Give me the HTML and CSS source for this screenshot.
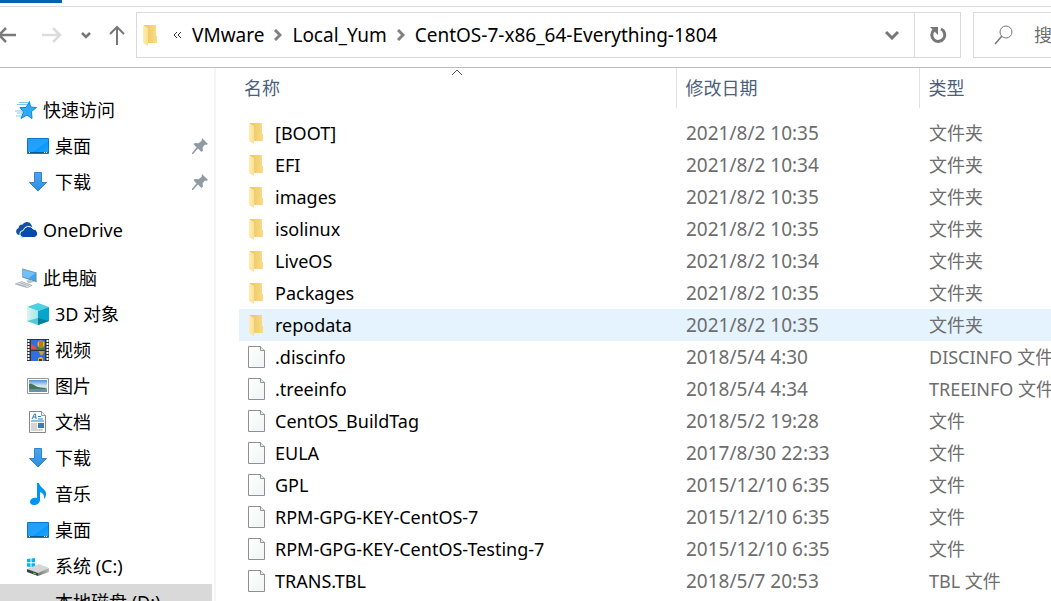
FILE: index.html
```html
<!DOCTYPE html>
<html lang="zh-CN">
<head>
<meta charset="utf-8">
<title>CentOS-7-x86_64-Everything-1804</title>
<link rel="stylesheet" href="styles.css">
</head>
<body>
<svg class="defs" aria-hidden="true">
  <defs>
    <linearGradient id="g-folder" x1="0" x2="1"><stop offset="0" stop-color="#e9c565"/><stop offset="1" stop-color="#fadc85"/></linearGradient>
    <linearGradient id="g-flap" x1="0" x2="1"><stop offset="0" stop-color="#ffeeb0"/><stop offset="1" stop-color="#fbe08d"/></linearGradient>
    <linearGradient id="g-page" x1="0" y1="0" x2="1" y2="1"><stop offset="0" stop-color="#ffffff"/><stop offset="1" stop-color="#f1f3f4"/></linearGradient>
    <linearGradient id="g-desk" x1="0" y1="0" x2="1" y2="1"><stop offset="0" stop-color="#1f9ffb"/><stop offset=".55" stop-color="#22a2fc"/><stop offset=".6" stop-color="#0c98fb"/><stop offset="1" stop-color="#1fa6ff"/></linearGradient>
    <linearGradient id="g-down" x1="0" y1="0" x2="0" y2="1"><stop offset="0" stop-color="#4ba6ee"/><stop offset="1" stop-color="#2e8ee0"/></linearGradient>
    <linearGradient id="g-cube" x1="0" x2="1"><stop offset="0" stop-color="#d8f5f3"/><stop offset="1" stop-color="#a4e6e8"/></linearGradient>
    <linearGradient id="g-sky" x1="0" y1="0" x2="0" y2="1"><stop offset="0" stop-color="#4f8fdc"/><stop offset=".5" stop-color="#d8ecf8"/><stop offset="1" stop-color="#86aac4"/></linearGradient>
    <linearGradient id="g-drive" x1="0" x2="1"><stop offset="0" stop-color="#777"/><stop offset="1" stop-color="#bbb"/></linearGradient>
  </defs>
  <symbol id="folder" viewBox="0 0 18 22"><path d="M2 1h12v11h1v7H2z" fill="url(#g-folder)"/><path d="M1 1l5 3v18l-5-3z" fill="url(#g-flap)"/></symbol>
  <symbol id="file" viewBox="0 0 18 22"><path d="M.5.5h12l4 4v17H.5z" fill="url(#g-page)"/><path d="M.5 21.500V.5h12l4 4v17z" fill="none" stroke="#8d8f90"/><path d="M12.500.5v4h4" fill="#eee" stroke="#8d8f90"/></symbol>
  <symbol id="star" viewBox="0 0 22 20"><path d="M14.500 1.500l1 5.500 6 .5-5 4 .5 7-5-3.500-6 3.500 2.500-6.500-3.500-4.500h6z" fill="#2fabf6" stroke="#1684d1"/><path d="M4 2.500h9M2 4.500h10M0 11h7M2 13h6M1 16h5" stroke="#7cc8f3"/></symbol>
  <symbol id="desktop" viewBox="0 0 22 22"><path d="M.5 3.500h21v15H.5z" fill="url(#g-desk)" stroke="#0878c8"/><path d="M1 17.500h20" stroke="#075a9d"/><path d="M2 17.500h1M17 17.500h1M19 17.500h1" stroke="#fff"/></symbol>
  <symbol id="download" viewBox="0 0 22 22"><path d="M7.500 1.500h7v10h5L11 20 2.500 11.500h5z" fill="url(#g-down)" stroke="#3184cc"/></symbol>
  <symbol id="cloud" viewBox="0 0 22 20"><path d="M4.500 15a3.500 3.500 0 0 1-1-6.800 4 4 0 0 1 4-3.700A5 5 0 0 1 16.500 5l.8 2.500-9 7.500z" fill="#174fa8"/><path d="M8.500 17.500a3.500 3.500 0 0 1-.3-7 5.500 5.500 0 0 1 10-1.500 4.300 4.300 0 0 1 1 8.500z" fill="#0a4aad" stroke="#fff"/></symbol>
  <symbol id="pc" viewBox="0 0 24 22"><path d="M8 .5l15.500 4.500v10.500L8 10.500z" fill="#6f8796"/><path d="M8.500 1.500L22.500 5.500v8.500L8.500 9.700z" fill="#38a8f2"/><path d="M8.500 1.500L22.500 5.500l-8 6-6-1.800z" fill="#70c1f5"/><path d="M12 14l5-1 4 2-6 2z" fill="#b9c2c9"/><path d="M.5 17.500l7-2.500 11 4-5 2.500z" fill="#e5e8ec" stroke="#a8b0b8"/><path d="M3 17.500l9 3M6 16.500l9 3" stroke="#9ca9b5"/></symbol>
  <symbol id="cube" viewBox="0 0 22 22"><path d="M0 4l11-4 11 4-11 4z" fill="#4bd1df"/><path d="M0 4l11 4v14L0 18z" fill="url(#g-cube)"/><path d="M11 8l11-4v14l-11 4z" fill="#06a5cc"/><path d="M11 15l11 3-11 4z" fill="#057f9b"/><path d="M0 18l11-3v7z" fill="#55c8d4"/></symbol>
  <symbol id="video" viewBox="0 0 22 22"><path d="M0 0h22v22H0z" fill="#333"/><path d="M1.500 1v20M20.500 1v20" stroke="#fff" stroke-width="2" stroke-dasharray="2 1"/><path d="M4 1h14v9H4zM4 12h14v10H4z" fill="#2f6fe0"/><path d="M4 7h5l2 2h7v2H4z" fill="#3e7d45"/><path d="M4 5l4 2 2 3H4z" fill="#df4c5c"/><circle cx="14" cy="5" r="3.500" fill="#efb51f"/><path d="M13 2v6M15 2v6" stroke="#874313"/><path d="M11.500 12h6l-2 4h-2z" fill="#df9825"/><circle cx="13.500" cy="20.500" r="2.500" fill="#efb51f"/><path d="M12 20h3v2h-3z" fill="#46372c"/></symbol>
  <symbol id="picture" viewBox="0 0 22 22"><path d="M.5 3.500h21v15H.5z" fill="#fff" stroke="#989898"/><path d="M2 5h18v12H2z" fill="url(#g-sky)"/><path d="M2 9c4-1 5 2 9 3 3 1 6 0 9 2v1H2z" fill="#43765b"/><path d="M2 14h18v3H2z" fill="#6991ac"/></symbol>
  <symbol id="doc" viewBox="0 0 22 22"><path d="M2.500.5h12l4 4v17h-16z" fill="#fff" stroke="#858585"/><path d="M14.500.5v4h4" fill="#eee" stroke="#999"/><path d="M5 8l2.500-5h1L9 8M6 6h3M11 5.500h3M11 8h5M4 10h13" fill="none" stroke="#2183c6"/><path d="M4 13h6M4 15h6M4 17h6M4 19h12" stroke="#aaa"/><path d="M11 12h6v5h-6z" fill="#367eb3"/></symbol>
  <symbol id="music" viewBox="0 0 22 22"><path d="M10 0h2c1 5 8 6 7 12-.3 2-1 3-2 4 .5-4-1-6-4-7v8c0 3-3 5-6 5s-4-1.500-4-3c0-3 3-5 7-4z" fill="#0095f4"/></symbol>
  <symbol id="drive" viewBox="0 0 22 22"><path d="M0 4l3.500-.5v3.700H0zM4.500 3.400L8 3v4.200H4.500zM0 8.200h3.500V12L0 11.500zM4.500 8.200H8v4.300L4.500 12z" fill="#00b8f1"/><path d="M0 14l12-5 10 4-11 5z" fill="#d6d6d6"/><path d="M0 14l11 4v3L0 17z" fill="#414141"/><path d="M11 18l11-5v4l-11 4z" fill="url(#g-drive)"/><path d="M6 17.500l3 1v1l-3-1z" fill="#5be45e"/></symbol>
  <symbol id="pin" viewBox="0 0 16 16"><path d="M10 0l6 6-2 1-1-.5-2.500 3 .5 3-1.500 1.500-3.500-3.500L1 16H0v-1l4.500-5.500L1.500 6 3 5l3.500.3L9.500 3z" fill="#8f9ba3"/></symbol>
  <symbol id="crumb" viewBox="0 0 8 12"><path d="M1 1l5 5-5 5" fill="none" stroke="#808080" stroke-width="3"/></symbol>
</svg>

<div class="ribbon"><div class="ribbon-tab"></div></div>

<header class="toolbar">
  <button class="nav-back" aria-label="后退"><svg width="17" height="18"><path d="M16 9H0M6 2L-1 9l7 7" fill="none" stroke="#7a7a7a" stroke-width="2.500"/></svg></button>
  <button class="nav-forward" aria-label="前进"><svg width="20" height="18"><path d="M0 9h18M11 2l7 7-7 7" fill="none" stroke="#dcdcdc" stroke-width="2.500"/></svg></button>
  <button class="nav-recent" aria-label="最近浏览的位置"><svg width="10" height="8"><path d="M1 2l4 4 4-4" fill="none" stroke="#777" stroke-width="2.500"/></svg></button>
  <button class="nav-up" aria-label="上移"><svg width="16" height="20"><path d="M8 20V2M1 9l7-7 7 7" fill="none" stroke="#777" stroke-width="2"/></svg></button>
  <nav class="address" aria-label="地址">
    <svg class="icon-folder"><use href="#folder"/></svg>
    <button class="more" aria-label="更多"><svg width="9" height="8"><path d="M4 1L1 4l3 3M8 1L5 4l3 3" fill="none" stroke="#333"/></svg></button>
    <a href="#">VMware</a>
    <svg class="crumb"><use href="#crumb"/></svg>
    <a href="#">Local_Yum</a>
    <svg class="crumb"><use href="#crumb"/></svg>
    <a href="#">CentOS-7-x86_64-Everything-1804</a>
    <button class="history" aria-label="以前的位置"><svg width="14" height="10"><path d="M1 2l6 6 6-6" fill="none" stroke="#767676" stroke-width="3"/></svg></button>
    <button class="refresh" aria-label="刷新"><svg width="18" height="18"><path d="M12 3a6.500 6.500 0 1 1-7 1" fill="none" stroke="#777" stroke-width="3"/><path d="M1 1h8v8z" fill="#777"/></svg></button>
  </nav>
  <label class="search">
    <svg width="20" height="20"><circle cx="12" cy="7" r="6" fill="none" stroke="#777"/><path d="M8 11l-7 8" stroke="#777" stroke-width="1.500"/></svg>
    <input type="text" placeholder="搜索" aria-label="搜索">
  </label>
</header>

<div class="panes">
  <nav class="tree" aria-label="导航窗格">
    <a class="root" href="#"><svg><use href="#star"/></svg>快速访问</a>
    <a href="#"><svg><use href="#desktop"/></svg>桌面<svg class="pin"><use href="#pin"/></svg></a>
    <a href="#"><svg><use href="#download"/></svg>下载<svg class="pin"><use href="#pin"/></svg></a>
    <a class="root" href="#"><svg><use href="#cloud"/></svg>OneDrive</a>
    <a class="root" href="#"><svg><use href="#pc"/></svg>此电脑</a>
    <a href="#"><svg><use href="#cube"/></svg>3D 对象</a>
    <a href="#"><svg><use href="#video"/></svg>视频</a>
    <a href="#"><svg><use href="#picture"/></svg>图片</a>
    <a href="#"><svg><use href="#doc"/></svg>文档</a>
    <a href="#"><svg><use href="#download"/></svg>下载</a>
    <a href="#"><svg><use href="#music"/></svg>音乐</a>
    <a href="#"><svg><use href="#desktop"/></svg>桌面</a>
    <a href="#"><svg><use href="#drive"/></svg>系统 (C:)</a>
    <a class="current" href="#"><svg></svg>本地磁盘 (D:)</a>
  </nav>
  <main class="files">
    <table>
      <colgroup><col class="col-name"><col class="col-date"><col></colgroup>
      <thead>
        <tr><th>名称<svg class="sort" width="12" height="7"><path d="M1 6l5-5 5 5" fill="none" stroke="#555"/></svg></th><th>修改日期</th><th>类型</th></tr>
      </thead>
      <tbody>
        <tr><td><span class="name"><svg><use href="#folder"/></svg>[BOOT]</span></td><td class="date">2021/8/2 10:35</td><td>文件夹</td></tr>
        <tr><td><span class="name"><svg><use href="#folder"/></svg>EFI</span></td><td class="date">2021/8/2 10:34</td><td>文件夹</td></tr>
        <tr><td><span class="name"><svg><use href="#folder"/></svg>images</span></td><td class="date">2021/8/2 10:35</td><td>文件夹</td></tr>
        <tr><td><span class="name"><svg><use href="#folder"/></svg>isolinux</span></td><td class="date">2021/8/2 10:35</td><td>文件夹</td></tr>
        <tr><td><span class="name"><svg><use href="#folder"/></svg>LiveOS</span></td><td class="date">2021/8/2 10:34</td><td>文件夹</td></tr>
        <tr><td><span class="name"><svg><use href="#folder"/></svg>Packages</span></td><td class="date">2021/8/2 10:35</td><td>文件夹</td></tr>
        <tr class="hovered"><td><span class="name"><svg><use href="#folder"/></svg>repodata</span></td><td class="date">2021/8/2 10:35</td><td>文件夹</td></tr>
        <tr><td><span class="name"><svg><use href="#file"/></svg>.discinfo</span></td><td class="date">2018/5/4 4:30</td><td>DISCINFO 文件</td></tr>
        <tr><td><span class="name"><svg><use href="#file"/></svg>.treeinfo</span></td><td class="date">2018/5/4 4:34</td><td>TREEINFO 文件</td></tr>
        <tr><td><span class="name"><svg><use href="#file"/></svg>CentOS_BuildTag</span></td><td class="date">2018/5/2 19:28</td><td>文件</td></tr>
        <tr><td><span class="name"><svg><use href="#file"/></svg>EULA</span></td><td class="date">2017/8/30 22:33</td><td>文件</td></tr>
        <tr><td><span class="name"><svg><use href="#file"/></svg>GPL</span></td><td class="date">2015/12/10 6:35</td><td>文件</td></tr>
        <tr><td><span class="name"><svg><use href="#file"/></svg>RPM-GPG-KEY-CentOS-7</span></td><td class="date">2015/12/10 6:35</td><td>文件</td></tr>
        <tr><td><span class="name"><svg><use href="#file"/></svg>RPM-GPG-KEY-CentOS-Testing-7</span></td><td class="date">2015/12/10 6:35</td><td>文件</td></tr>
        <tr><td><span class="name"><svg><use href="#file"/></svg>TRANS.TBL</span></td><td class="date">2018/5/7 20:53</td><td>TBL 文件</td></tr>
      </tbody>
    </table>
  </main>
</div>
</body>
</html>
```
FILE: styles.css
```css
* { box-sizing: border-box; }

body {
  margin: 0;
  height: 100vh;
  display: flex;
  flex-direction: column;
  overflow: hidden;
  background: #fff;
  color: #000;
  font: 18px/24px "Noto Sans", "Noto Sans CJK SC", sans-serif;
}

a { color: inherit; text-decoration: none; }
svg { flex: none; display: block; }
button {
  flex: none;
  display: flex;
  align-items: center;
  justify-content: center;
  padding: 0;
  border: 0;
  background: none;
}
.defs { position: absolute; width: 0; height: 0; }

.ribbon { flex: none; height: 7px; border-bottom: 1px solid #dadada; }
.ribbon-tab { width: 62px; height: 3px; background: #0063b1; }

/* Navigation buttons, address bar and search */
.toolbar {
  flex: none;
  display: flex;
  height: 61px;
  padding: 5px 0 9px;
  border-bottom: 1px solid #bcbcbc;
}
.nav-back { width: 34px; justify-content: flex-start; }
.nav-forward { width: 36px; }
.nav-recent { width: 32px; }
.nav-up { width: 30px; margin-right: 4px; }

.address {
  flex: 1;
  min-width: 0;
  display: flex;
  align-items: center;
  border: 1px solid #d9d9d9;
  padding-left: 5px;
  font-size: 19px;
  white-space: nowrap;
}
.icon-folder { width: 18px; height: 22px; }
.more { width: 24px; margin: 0 3px 0 5px; }
.crumb { width: 8px; height: 12px; margin: 0 10px; }
.history { width: 44px; height: 100%; margin-left: auto; }
.refresh { width: 46px; height: 100%; border-left: 1px solid #d9d9d9; }

.search {
  flex: 0 0 78px;
  min-width: 0;
  margin-left: 12px;
  display: flex;
  align-items: center;
  gap: 20px;
  padding-left: 20px;
  border: solid #d9d9d9;
  border-width: 1px 0 1px 1px;
  overflow: hidden;
}
.search input {
  flex: none;
  width: 160px;
  padding: 0;
  border: 0;
  outline: 0;
  background: none;
  font: inherit;
}
.search input::placeholder { color: #6d6d6d; opacity: 1; }

.panes { flex: 1; min-height: 0; display: flex; }

/* Navigation tree */
.tree {
  flex: none;
  width: 216px;
  padding: 24px 2px 0 0;
  border-right: 2px solid #f5f5f5;
  overflow: hidden;
}
.tree a {
  display: flex;
  align-items: center;
  gap: 6px;
  height: 36px;
  padding: 0 4px 0 27px;
}
.tree svg { width: 22px; height: 22px; }
.tree .root { padding-left: 15px; }
.tree .root ~ .root { margin-top: 12px; }
.tree .pin { width: 16px; height: 16px; margin-left: auto; }
.tree .current { background: #d9d9d9; }

/* File list */
.files { flex: 1; min-width: 0; padding-left: 23px; overflow: hidden; }
table { width: 100%; border-collapse: collapse; table-layout: fixed; }
.col-name { width: 437px; }
.col-date { width: 243px; }
th {
  position: relative;
  height: 40px;
  padding: 0 0 0 9px;
  border-left: 1px solid #e2e2e2;
  color: #4c607a;
  font-weight: 400;
  text-align: left;
}
th:first-child { padding-left: 5px; border-left: 0; }
.sort { position: absolute; top: 1px; left: 0; right: 0; margin: 0 auto; }
tbody::before { content: ""; display: block; height: 9px; }
td {
  height: 32px;
  padding: 0 0 0 10px;
  color: #6d6d6d;
  white-space: nowrap;
  overflow: hidden;
}
td:first-child { padding-left: 9px; color: #000; }
.date { font-size: 19px; }
.name { display: flex; align-items: center; gap: 9px; }
.name svg { width: 18px; height: 22px; }
.hovered { background: #e5f3ff; }
```
